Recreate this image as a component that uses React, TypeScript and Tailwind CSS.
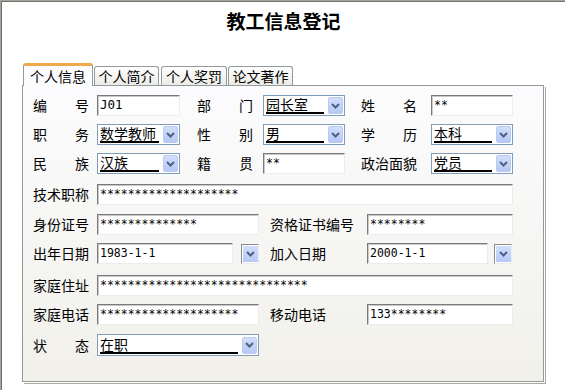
import React from 'react';

const cjk = "font-['Noto_Sans_CJK_SC','Noto_Sans_CJK_JP',sans-serif]";
const mono = "font-['DejaVu_Sans_Mono','Liberation_Mono',monospace]";

const Label: React.FC<{ text: string; className?: string }> = ({ text, className = 'w-[56px]' }) => {
  // two-character labels are spread over the full label width
  if (text.length === 2) {
    return (
      <div className={`${className} flex justify-between text-[14px] leading-[21px] text-black ${cjk}`}>
        <span>{text[0]}</span>
        <span>{text[1]}</span>
      </div>
    );
  }
  return <div className={`${className} text-[14px] leading-[21px] text-black whitespace-nowrap ${cjk}`}>{text}</div>;
};

const TextBox: React.FC<{ value: string; className: string }> = ({ value, className }) => (
  <div
    className={`${className} h-[21px] flex items-center bg-white border border-t-[#7a7a7a] border-l-[#7a7a7a] border-r-[#ececec] border-b-[#ececec] shadow-[inset_1px_1px_0_#c9c9c9] pl-[2px] text-[11.5px] text-black overflow-hidden whitespace-nowrap ${mono}`}
  >
    {value}
  </div>
);

const Chevron = () => (
  <svg width="9" height="6" viewBox="0 0 9 6">
    <path d="M1 1 L4.5 4.5 L8 1" fill="none" stroke="#4d6185" strokeWidth="2" />
  </svg>
);

const ComboBtn = () => (
  <div className="w-[15px] h-[17px] rounded-[2px] border border-[#b9cbf3] bg-gradient-to-b from-[#d2defb] to-[#b6c9f5] flex items-center justify-center">
    <Chevron />
  </div>
);

const Combo: React.FC<{ value: string; className: string }> = ({ value, className }) => (
  <div className={`${className} h-[21px] flex items-center bg-white border border-[#7f9db9] pl-[2px] pr-[1px]`}>
    <div className={`flex-1 h-[17px] border-b-2 border-black text-[14px] leading-[15px] text-black whitespace-nowrap ${cjk}`}>
      {value}
    </div>
    <div className="ml-[4px]">
      <ComboBtn />
    </div>
  </div>
);

const DateBtn: React.FC<{ className?: string }> = ({ className = '' }) => (
  <div
    className={`${className} w-[18px] h-[20px] border border-t-[#8a8a8a] border-l-[#8a8a8a] border-r-[#ececec] border-b-[#ececec] bg-white flex items-center justify-center`}
  >
    <div className="w-[15px] h-[16px] bg-gradient-to-b from-[#d2defb] to-[#b6c9f5] flex items-center justify-center">
      <Chevron />
    </div>
  </div>
);

export default function App() {
  return (
    <div className="w-[565px] h-[390px] bg-white border-t border-l border-[#a5a5a0] overflow-hidden">
      <div className="h-full border-t border-l border-[#71716b]">
        <h1 className={`text-center text-[19px] leading-[24px] font-bold text-black pt-[7px] ${cjk}`}>教工信息登记</h1>

        {/* tab strip */}
        <div className={`flex items-end h-[21px] mt-[31px] ml-[21px] text-[14px] text-black ${cjk}`}>
          <div className="relative z-10 -mb-px w-[70px] h-[23px] bg-[#fcfcfe] border border-[#919b9c] border-b-0 border-t-[3px] border-t-[#f0a94a] rounded-t-[3px] flex items-center justify-center leading-[18px]">
            个人信息
          </div>
          {['个人简介', '个人奖罚', '论文著作'].map((t, i) => (
            <div
              key={t}
              className={`${i === 0 ? 'ml-px w-[65px]' : i === 1 ? 'ml-[2px] w-[66px]' : 'ml-px w-[65px]'} h-[19px] border border-[#919b9c] border-b-0 rounded-t-[3px] bg-gradient-to-b from-white to-[#ecebe6] flex items-center justify-center leading-[18px]`}
            >
              {t}
            </div>
          ))}
        </div>

        {/* panel */}
        <div className="ml-[20px] w-[522px] h-[297px] border border-[#919b9c] bg-gradient-to-b from-[#fcfcfe] to-[#f1f0ea] shadow-[1px_1px_0_#ffffff,2px_2px_0_#aca899] pt-[9px] pl-[10px]">
          <div className="flex items-center h-[21px]">
            <Label text="编号" />
            <TextBox value="J01" className="ml-[8px] w-[83px] text-[12.5px]" />
            <Label text="部门" className="ml-[17px] w-[56px]" />
            <Combo value="园长室" className="ml-[10px] w-[82px]" />
            <Label text="姓名" className="ml-[16px] w-[56px]" />
            <TextBox value="**" className="ml-[14px] w-[82px]" />
          </div>

          <div className="flex items-center h-[21px] mt-[8px]">
            <Label text="职务" />
            <Combo value="数学教师" className="ml-[8px] w-[83px]" />
            <Label text="性别" className="ml-[17px] w-[56px]" />
            <Combo value="男" className="ml-[10px] w-[82px]" />
            <Label text="学历" className="ml-[16px] w-[56px]" />
            <Combo value="本科" className="ml-[14px] w-[82px]" />
          </div>

          <div className="flex items-center h-[21px] mt-[8px]">
            <Label text="民族" />
            <Combo value="汉族" className="ml-[8px] w-[83px]" />
            <Label text="籍贯" className="ml-[17px] w-[56px]" />
            <TextBox value="**" className="ml-[10px] w-[82px]" />
            <Label text="政治面貌" className="ml-[16px] w-[56px]" />
            <Combo value="党员" className="ml-[14px] w-[82px]" />
          </div>

          <div className="flex items-center h-[21px] mt-[10px]">
            <Label text="技术职称" />
            <TextBox value="********************" className="ml-[8px] w-[416px]" />
          </div>

          <div className="flex items-center h-[21px] mt-[9px]">
            <Label text="身份证号" />
            <TextBox value="**************" className="ml-[8px] w-[162px]" />
            <Label text="资格证书编号" className="ml-[11px] w-[84px]" />
            <TextBox value="********" className="ml-[13px] w-[146px]" />
          </div>

          <div className="flex items-center h-[21px] mt-[8px]">
            <Label text="出年日期" />
            <TextBox value="1983-1-1" className="ml-[8px] w-[136px]" />
            <DateBtn className="ml-[8px]" />
            <Label text="加入日期" className="ml-[11px] w-[84px]" />
            <TextBox value="2000-1-1" className="ml-[13px] w-[121px]" />
            <DateBtn className="ml-[6px]" />
          </div>

          <div className="flex items-center h-[21px] mt-[11px]">
            <Label text="家庭住址" />
            <TextBox value="******************************" className="ml-[8px] w-[416px]" />
          </div>

          <div className="flex items-center h-[21px] mt-[8px]">
            <Label text="家庭电话" />
            <TextBox value="********************" className="ml-[8px] w-[162px]" />
            <Label text="移动电话" className="ml-[11px] w-[84px]" />
            <TextBox value="133********" className="ml-[13px] w-[146px]" />
          </div>

          <div className="flex items-center h-[22px] mt-[9px]">
            <Label text="状态" />
            <Combo value="在职" className="ml-[8px] w-[162px] h-[22px]" />
          </div>
        </div>
      </div>
    </div>
  );
}
